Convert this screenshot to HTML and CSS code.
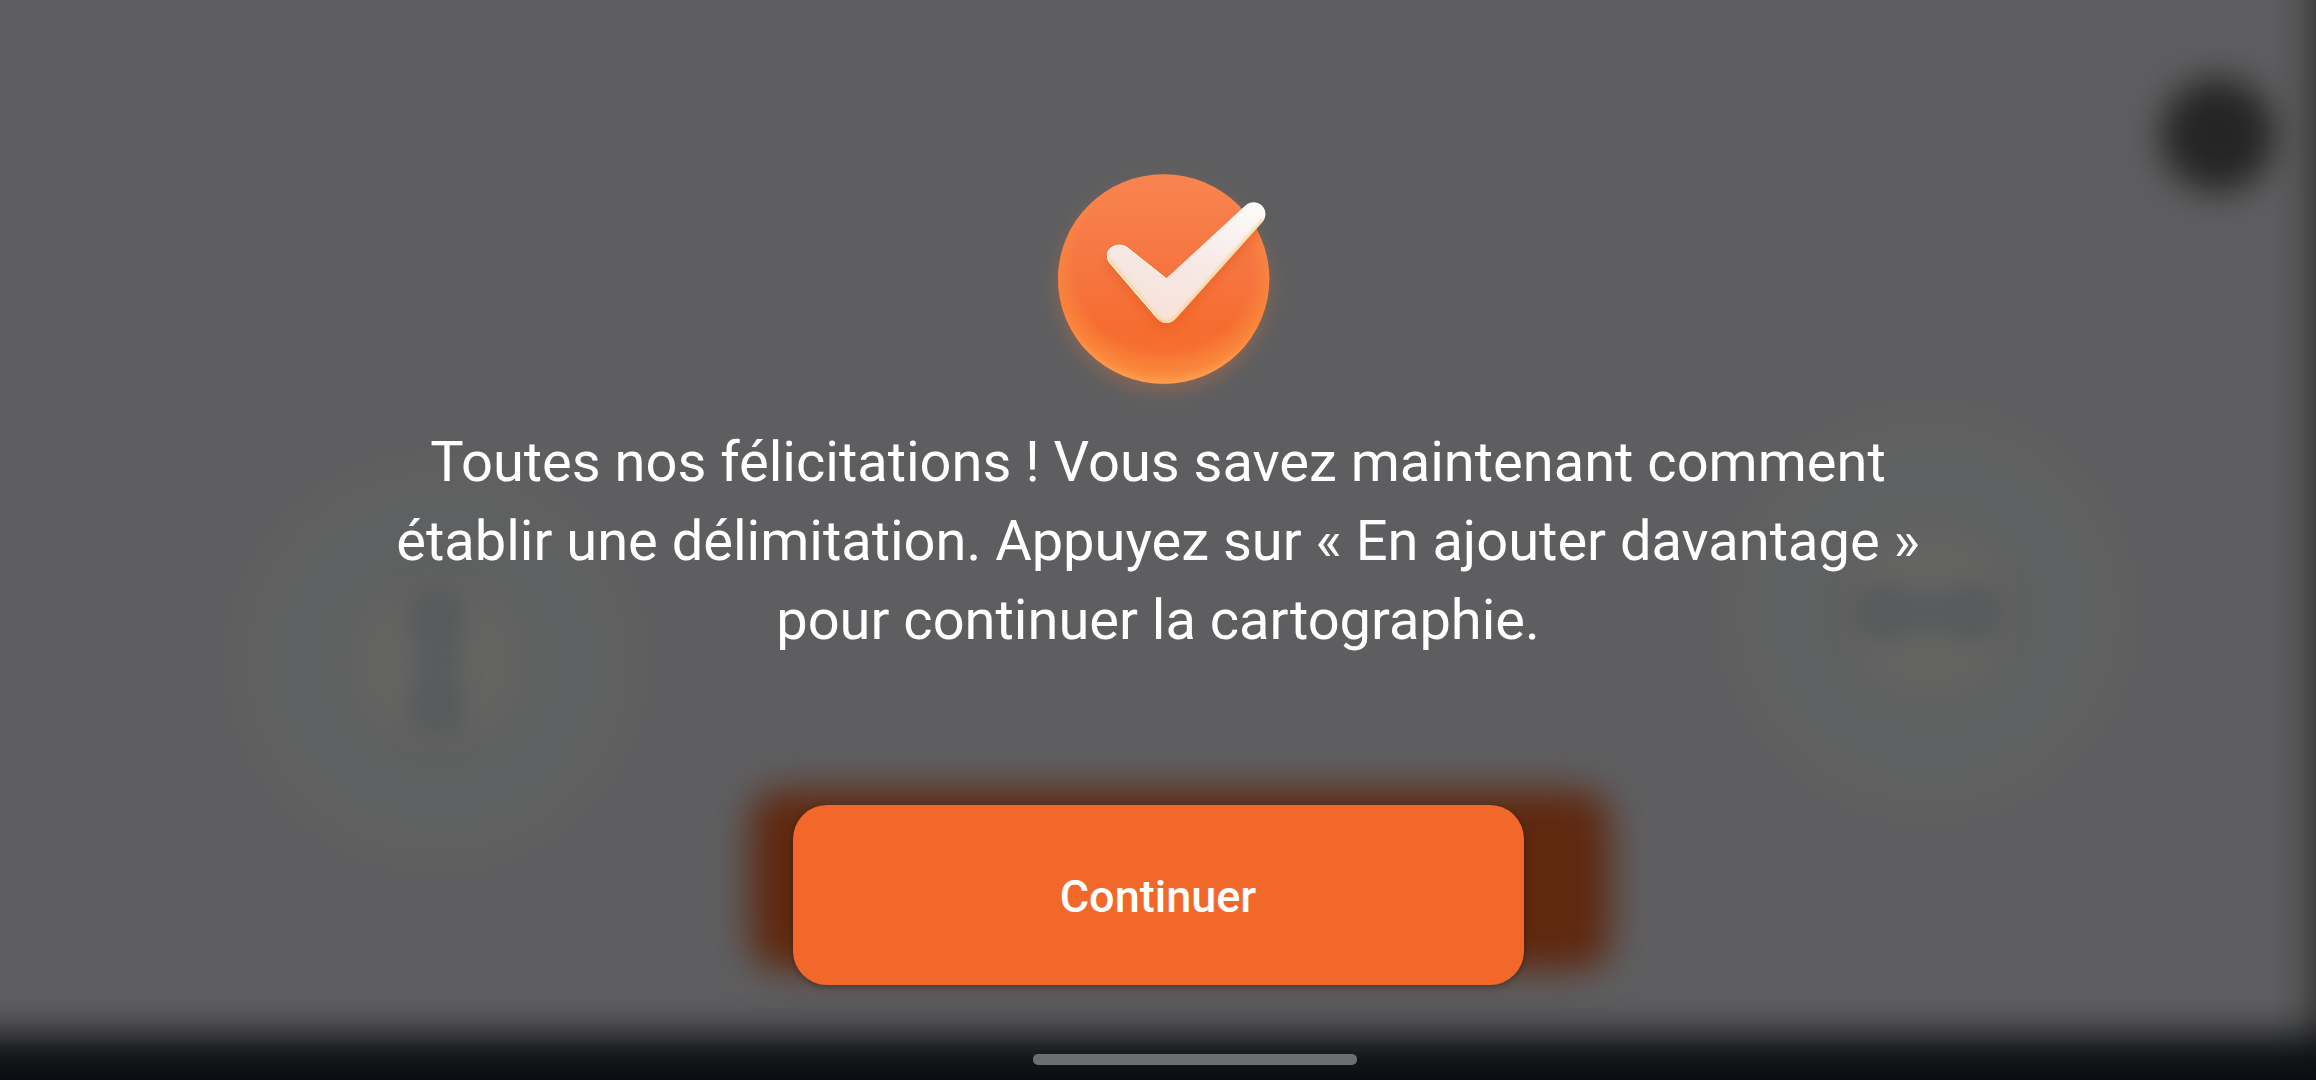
FILE: index.html
```html
<!DOCTYPE html>
<html lang="fr">

<head>
    <meta charset="UTF-8" />
    <meta name="viewport" content="width=device-width, initial-scale=1.0" />
    <title>Cartographie</title>
    <link rel="stylesheet" href="styles.css">
</head>

<body>
    <!-- Écran de pilotage flouté derrière le message -->
    <div class="backdrop" aria-hidden="true">
        <div class="joystick joystick-left">
            <span class="dot"></span>
            <span class="dot"></span>
        </div>
        <div class="joystick joystick-right">
            <span class="dot"></span>
            <span class="dot"></span>
        </div>
        <div class="back-button"></div>
        <div class="back-close"></div>
        <div class="edge-right"></div>
        <div class="edge-bottom"></div>
    </div>

    <main class="dialog">
        <svg class="success-icon" viewBox="-21 0 870 780" aria-hidden="true">
            <defs>
                <linearGradient id="disc" x1="0" y1="0" x2="0" y2="1">
                    <stop offset="0" stop-color="#f9844f" />
                    <stop offset="0.4" stop-color="#f67743" />
                    <stop offset="0.75" stop-color="#f56c30" />
                    <stop offset="1" stop-color="#f97935" />
                </linearGradient>
                <radialGradient id="rim" cx="0.5" cy="0.43" r="0.58">
                    <stop offset="0.72" stop-color="#fb9440" stop-opacity="0" />
                    <stop offset="0.9" stop-color="#fb9440" stop-opacity="0.6" />
                    <stop offset="1" stop-color="#fda658" />
                </radialGradient>
                <linearGradient id="tick" x1="0.8" y1="0" x2="0.4" y2="1">
                    <stop offset="0" stop-color="#fcfaf8" />
                    <stop offset="0.5" stop-color="#f6e9e6" />
                    <stop offset="1" stop-color="#f8e2da" />
                </linearGradient>
                <filter id="glow" x="-30%" y="-30%" width="160%" height="160%">
                    <feGaussianBlur stdDeviation="30" />
                </filter>
                <filter id="soft" x="-30%" y="-30%" width="160%" height="160%">
                    <feGaussianBlur stdDeviation="14" />
                </filter>
                <filter id="blur-edge" x="-10%" y="-10%" width="120%" height="120%">
                    <feGaussianBlur stdDeviation="5" />
                </filter>
                <clipPath id="disc-clip">
                    <ellipse cx="431" cy="387" rx="317" ry="314" />
                </clipPath>
                <path id="tick-shape" d="M325 294 L439 385 L677 166 C690 154 711 153 725 166 C739 179 740 201 728 215 L467 506 C452 523 427 523 412 506 L268 338 C258 325 258 308 269 296 C284 281 309 281 325 294 Z" />
                <clipPath id="tick-clip">
                    <use href="#tick-shape" />
                </clipPath>
            </defs>
            <ellipse cx="431" cy="410" rx="312" ry="308" fill="#e0763f" opacity="0.38" filter="url(#glow)" />
            <ellipse cx="431" cy="387" rx="317" ry="314" fill="url(#disc)" />
            <ellipse cx="431" cy="387" rx="317" ry="314" fill="url(#rim)" />
            <g clip-path="url(#disc-clip)">
                <use href="#tick-shape" y="22" fill="#e4551c" opacity="0.4" filter="url(#soft)" />
            </g>
            <use href="#tick-shape" fill="url(#tick)" />
            <g clip-path="url(#tick-clip)">
                <path d="M264 330 L412 506 Q439 532 467 506 L734 210" fill="none" stroke="#fbd69c" stroke-width="16" filter="url(#blur-edge)" />
                <path d="M439 385 L325 294 C309 281 284 281 269 296 C258 308 258 325 268 338 L412 506" fill="none" stroke="#fff6e4" stroke-width="7" />
            </g>
        </svg>

        <p class="message">Toutes nos félicitations&nbsp;! Vous savez maintenant comment établir une délimitation. Appuyez sur «&nbsp;En ajouter davantage&nbsp;» pour continuer la cartographie.</p>

        <button type="button" class="continue">Continuer</button>
    </main>

    <div class="home-bar"></div>
</body>

</html>
```
FILE: styles.css
```css
body {
    display: flex;
    flex-direction: column;
    box-sizing: border-box;
    min-height: 100vh;
    margin: 0;
    padding: 150px 0 15px;
    overflow: hidden;
    background-color: #5e5e60;
    color: #fff;
    font-family: Roboto, "Liberation Sans", sans-serif;
}

/* Fond flouté */
.backdrop {
    position: absolute;
    inset: 0;
    z-index: -1;
    overflow: hidden;
}

.joystick {
    position: absolute;
    display: flex;
    align-items: center;
    justify-content: center;
    gap: 44px;
    box-sizing: border-box;
    width: 430px;
    height: 430px;
    border-radius: 50%;
    background: radial-gradient(circle closest-side, #656663 0, #646562 60px, #5f6060 96px, #5f6062 140px, #60605f 185px, #5e5e60 215px);
}

.joystick-left {
    flex-direction: column;
    top: 447px;
    left: 222px;
}

.joystick-right {
    top: 397px;
    right: 173px;
}

/* Creux sombre entre les deux points */
.joystick::before {
    content: "";
    position: absolute;
    width: 120px;
    height: 44px;
    border-radius: 22px;
    background-color: #5a5c5e;
    filter: blur(10px);
}

.joystick-left::before {
    width: 44px;
    height: 120px;
}

.dot {
    position: relative;
    width: 54px;
    height: 54px;
    border-radius: 50%;
    background-color: #585a5c;
    filter: blur(12px);
}

.back-button {
    position: absolute;
    top: 790px;
    left: 50%;
    width: 860px;
    height: 180px;
    margin-left: -408px;
    border-radius: 32px;
    background-color: #5f280f;
    filter: blur(18px);
}

.back-close {
    position: absolute;
    top: 78px;
    right: 41px;
    width: 114px;
    height: 114px;
    border-radius: 50%;
    background-color: #252525;
    filter: blur(17px);
}

.edge-right {
    position: absolute;
    top: 0;
    right: 0;
    bottom: 0;
    width: 44px;
    background: linear-gradient(to right, rgba(64, 64, 64, 0), rgba(64, 64, 64, 0.3) 55%, #404040);
}

.edge-bottom {
    position: absolute;
    right: 0;
    bottom: 0;
    left: 0;
    height: 90px;
    background: linear-gradient(to bottom, rgba(12, 14, 18, 0), rgba(12, 14, 18, 0.04) 15px, rgba(12, 14, 18, 0.19) 30px, rgba(12, 14, 18, 0.48) 45px, rgba(12, 14, 18, 0.74) 57px, rgba(12, 14, 18, 0.92) 70px, #0c0d12);
}

/* Message */
.dialog {
    display: flex;
    flex: 1;
    flex-direction: column;
    align-items: center;
}

.success-icon {
    width: 290px;
    height: 260px;
}

.message {
    max-width: 68%;
    margin: 13px 0 145px;
    font-size: 56px;
    line-height: 79px;
    text-align: center;
}

.continue {
    width: 731px;
    max-width: 90%;
    height: 180px;
    padding: 2px 0 0;
    border: none;
    border-radius: 34px;
    background-color: #f2682a;
    box-shadow: 0 2px 6px rgba(0, 0, 0, 0.3);
    color: #fff;
    font-family: inherit;
    font-size: 45px;
    font-weight: 500;
    cursor: pointer;
}

.home-bar {
    align-self: center;
    width: 324px;
    height: 11px;
    margin-left: 74px;
    border-radius: 5px;
    background-color: #6d6e70;
}
```
